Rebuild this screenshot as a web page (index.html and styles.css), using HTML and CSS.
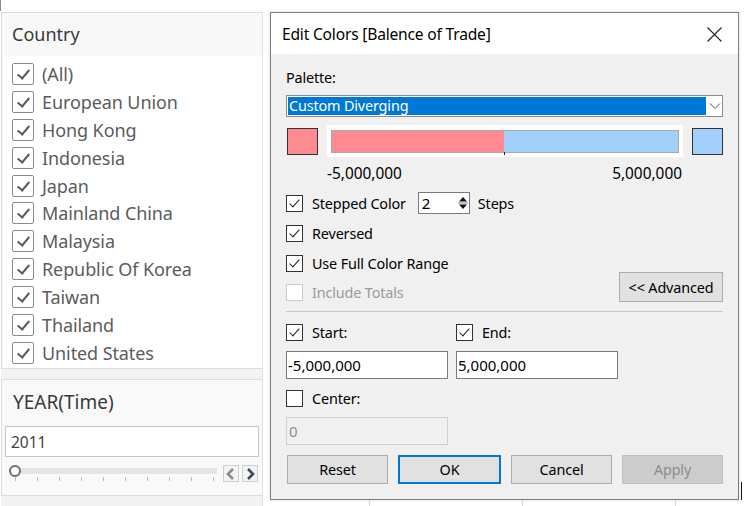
FILE: index.html
```html
<!DOCTYPE html>
<html>
<head>
<meta charset="utf-8">
<link rel="stylesheet" href="styles.css">
</head>
<body>
<div class="page">
  <aside class="sidebar">
    <section class="panel country">
      <div class="panel-head">Country</div>
      <ul class="list">
        <li><span class="cb"></span>(All)</li>
        <li><span class="cb"></span>European Union</li>
        <li><span class="cb"></span>Hong Kong</li>
        <li><span class="cb"></span>Indonesia</li>
        <li><span class="cb"></span>Japan</li>
        <li><span class="cb"></span>Mainland China</li>
        <li><span class="cb"></span>Malaysia</li>
        <li><span class="cb"></span>Republic Of Korea</li>
        <li><span class="cb"></span>Taiwan</li>
        <li><span class="cb"></span>Thailand</li>
        <li><span class="cb"></span>United States</li>
      </ul>
    </section>
    <section class="panel year">
      <div class="year-head">YEAR(Time)</div>
      <div class="year-input">2011</div>
      <div class="slider-row">
        <div class="slider">
          <div class="track"></div>
          <div class="knob"></div>
          <div class="ticks">
            <i></i><i></i><i></i><i></i><i></i><i></i><i></i><i></i><i></i><i></i>
          </div>
        </div>
        <div class="arrow prev"><svg width="14" height="14" viewBox="0 0 14 14"><path d="M9 2 L4 7 L9 12" fill="none" stroke="#8a8a8a" stroke-width="2.6"/></svg></div>
        <div class="arrow next"><svg width="14" height="14" viewBox="0 0 14 14"><path d="M5 2 L10 7 L5 12" fill="none" stroke="#3b4a5e" stroke-width="2.6"/></svg></div>
      </div>
    </section>
  </aside>
  <div class="gutter"></div>
  <div class="right">
    <div class="dialog">
      <div class="titlebar">
        <span class="title">Edit Colors [Balence of Trade]</span>
        <svg class="close" width="15" height="15" viewBox="0 0 15 15"><path d="M0.5 0.5 L14.5 14.5 M14.5 0.5 L0.5 14.5" stroke="#222" stroke-width="1.1"/></svg>
      </div>
      <div class="dbody">
        <div class="label-row">Palette:</div>
        <div class="select">
          <div class="select-val">Custom Diverging</div>
          <svg class="chev" width="12" height="8" viewBox="0 0 12 8"><path d="M1 1.5 L6 6.5 L11 1.5" fill="none" stroke="#555" stroke-width="1"/></svg>
        </div>
        <div class="swatch-row">
          <div class="swatch neg"></div>
          <div class="ramp">
            <div class="ramp-bar"><div class="ramp-neg"></div><div class="ramp-pos"></div></div>
            <div class="ramp-tick"></div>
          </div>
          <div class="swatch pos"></div>
        </div>
        <div class="range-labels"><span>-5,000,000</span><span>5,000,000</span></div>
        <div class="opt stepped">
          <span class="dcb on"></span><span>Stepped Color</span>
          <div class="spin"><span>2</span>
            <div class="spin-btns">
              <svg width="12" height="18" viewBox="0 0 12 18"><path d="M2 7.5 L6 3 L10 7.5 Z" fill="#111"/><path d="M2 10.5 L6 15 L10 10.5 Z" fill="#111"/><line x1="1" y1="9" x2="11" y2="9" stroke="#888" stroke-width="1"/></svg>
            </div>
          </div>
          <span>Steps</span>
        </div>
        <div class="opt rev"><span class="dcb on"></span><span>Reversed</span></div>
        <div class="opt full"><span class="dcb on"></span><span>Use Full Color Range</span></div>
        <div class="totals-row">
          <div class="opt disabled"><span class="dcb off"></span><span>Include Totals</span></div>
          <button class="btn adv">&lt;&lt; Advanced</button>
        </div>
        <div class="sep"></div>
        <div class="grid2">
          <div class="opt"><span class="dcb on"></span><span>Start:</span></div>
          <div class="opt"><span class="dcb on"></span><span>End:</span></div>
          <div class="field">-5,000,000</div>
          <div class="field">5,000,000</div>
          <div class="opt"><span class="dcb"></span><span>Center:</span></div>
          <div></div>
          <div class="field dis">0</div>
        </div>
        <div class="buttons">
          <button class="btn">Reset</button>
          <button class="btn ok">OK</button>
          <button class="btn">Cancel</button>
          <button class="btn applyb">Apply</button>
        </div>
      </div>
    </div>
    <div class="under"><i></i><i></i><i></i><i></i></div>
    <div class="cursor"></div>
  </div>
</div>
</body>
</html>
```

FILE: styles.css
```css
* { box-sizing: border-box; }
html, body { margin: 0; padding: 0; }
body {
  width: 744px;
  height: 506px;
  overflow: hidden;
  background: #ffffff;
  font-family: "Noto Sans", sans-serif;
}
.page {
  display: flex;
  padding-top: 12px;
  height: 506px;
  border-left: 1px solid #9a9a9a;
  border-image: linear-gradient(to bottom, #8a8a8a 0, #8a8a8a 12px, transparent 12px) 1;
}
.sidebar {
  width: 262px;
  background: #f3f3f3;
  display: flex;
  flex-direction: column;
  gap: 10px;
  height: 494px;
}
.panel {
  border: 1px solid #dcdcdc;
  background: #fff;
}
.country { height: 357px; }
.panel-head {
  height: 43px;
  background: #f8f8f8;
  padding: 10px 0 0 10px;
  font-size: 18px;
  color: #3a3a3a;
  line-height: 22px;
}
.list {
  list-style: none;
  margin: 0;
  padding: 4px 0 0 0;
}
.list li {
  height: 27.9px;
  display: flex;
  align-items: center;
  font-size: 18px;
  color: #5c5c5c;
  padding-left: 10px;
  white-space: nowrap;
  letter-spacing: -0.1px;
}
.cb {
  width: 22px;
  height: 22px;
  border: 1px solid #8a8a8a;
  border-radius: 2px;
  margin-right: 8px;
  position: relative;
  background: #fff;
  flex: none;
}
.cb::after {
  content: "";
  position: absolute;
  left: 7px;
  top: 3px;
  width: 5px;
  height: 10px;
  border: solid #5a5a5a;
  border-width: 0 2px 2px 0;
  transform: rotate(40deg);
}
.year {
  height: 117px;
  background: #f9f9f9;
  padding: 0 3px 0 3px;
}
.year-head {
  height: 46px;
  padding: 11px 0 0 8px;
  font-size: 19px;
  color: #3a3a3a;
  line-height: 22px;
}
.year-input {
  height: 31px;
  width: 254px;
  border: 1px solid #c6c6c6;
  background: #fff;
  font-size: 15.5px;
  color: #444;
  line-height: 31px;
  padding-left: 5px;
}
.slider-row {
  display: flex;
  align-items: center;
  margin-top: 8px;
  height: 17px;
}
.slider {
  position: relative;
  width: 216px;
  height: 17px;
}
.track {
  position: absolute;
  left: 10px;
  right: 4px;
  top: 3px;
  height: 6px;
  background: #e5e5e5;
}
.knob {
  position: absolute;
  left: 4px;
  top: 0;
  width: 12px;
  height: 12px;
  border-radius: 50%;
  border: 2px solid #6e6e6e;
  background: #fff;
}
.ticks {
  position: absolute;
  left: 10px;
  top: 12px;
  display: flex;
  gap: 21px;
}
.ticks i {
  display: block;
  width: 1px;
  height: 4px;
  background: #bdbdbd;
}
.arrow {
  width: 16px;
  height: 17px;
  border: 1px solid #d0d0d0;
  background: #f3f3f3;
  display: flex;
  align-items: center;
  justify-content: center;
}
.arrow.prev { margin-left: 2px; }
.arrow.next { margin-left: 3px; }
.gutter {
  width: 8px;
  border-left: 1px solid #e0e0e0;
  margin-left: -1px;
}
.right {
  position: relative;
  width: 473px;
}
.dialog {
  width: 469px;
  height: 488px;
  border: 1px solid #7d7d7d;
  background: #f0f0f0;
  box-shadow: 0 0 3px rgba(0,0,0,0.15);
  display: flex;
  flex-direction: column;
}
.titlebar {
  height: 41px;
  background: #fff;
  display: flex;
  align-items: center;
  justify-content: space-between;
  padding: 0 16px 0 11px;
  flex: none;
}
.title {
  font-size: 15.6px;
  color: #000;
  letter-spacing: -0.2px;
}
.close { margin-top: 1px; }
.dbody {
  padding: 14px 16px 0 15px;
  font-size: 14.4px;
  color: #000;
  letter-spacing: -0.15px;
}
.label-row {
  height: 20px;
  line-height: 20px;
}
.select {
  margin-top: 7px;
  height: 22px;
  border: 1px solid #8c8c8c;
  background: #fff;
  display: flex;
  align-items: center;
  padding: 1px;
  width: 437px;
}
.select-val {
  width: 418px;
  height: 18px;
  background: #0078d7;
  color: #fff;
  line-height: 18px;
  padding-left: 1px;
}
.chev { margin-left: 3px; }
.swatch-row {
  margin-top: 8px;
  height: 32px;
  display: flex;
  align-items: center;
  width: 437px;
}
.swatch {
  width: 31px;
  height: 27px;
  border: 1px solid #333;
  flex: none;
}
.swatch.neg { background: #ff8a91; margin-left: 1px; }
.swatch.pos { background: #a3cffb; margin-left: 9px; }
.ramp {
  margin-left: 9px;
  width: 356px;
  height: 32px;
  background: #fff;
  padding: 5px 4px 0 4px;
  position: relative;
}
.ramp-bar {
  height: 23px;
  border: 1px solid #a9a9a9;
  display: flex;
}
.ramp-neg { width: 172px; background: #ff8a91; }
.ramp-pos { flex: 1; background: #a3cffb; }
.ramp-tick {
  position: absolute;
  left: 177px;
  top: 27px;
  width: 1px;
  height: 3px;
  background: #222;
}
.range-labels {
  margin-top: 7px;
  height: 20px;
  line-height: 20px;
  display: flex;
  justify-content: space-between;
  padding-left: 41px;
  width: 396px;
  font-size: 15.4px;
  letter-spacing: 0;
}
.opt {
  display: flex;
  align-items: center;
  height: 20px;
  white-space: nowrap;
}
.dcb {
  width: 17px;
  height: 17px;
  border: 1px solid #333;
  background: #fff;
  margin-right: 9px;
  position: relative;
  flex: none;
}
.dcb.on::after {
  content: "";
  position: absolute;
  left: 5px;
  top: 1px;
  width: 4px;
  height: 9px;
  border: solid #222;
  border-width: 0 1.3px 1.3px 0;
  transform: rotate(42deg);
}
.dcb.off { border-color: #cccccc; }
.stepped {
  margin-top: 8px;
  height: 22px;
}
.spin {
  margin-left: 12px;
  width: 52px;
  height: 22px;
  border: 1px solid #7a7a7a;
  background: #fff;
  display: flex;
  align-items: center;
  justify-content: space-between;
  padding-left: 3px;
  margin-right: 8px;
  font-size: 15px;
}
.spin-btns { display: flex; align-items: center; height: 20px; }
.rev { margin-top: 9px; }
.full { margin-top: 10px; }
.totals-row {
  margin-top: -1px;
  height: 30px;
  display: flex;
  justify-content: space-between;
  align-items: flex-end;
  width: 437px;
}
.disabled { color: #9b9b9b; }
.btn {
  font-family: "Noto Sans", sans-serif;
  font-size: 14.4px;
  letter-spacing: -0.15px;
  background: #e1e1e1;
  border: 1px solid #adadad;
  color: #000;
  padding: 0;
  margin: 0;
}
.adv {
  width: 104px;
  height: 30px;
}
.sep {
  margin-top: 9px;
  height: 1px;
  background: #c9c9c9;
  width: 437px;
}
.grid2 {
  margin-top: 10px;
  display: grid;
  grid-template-columns: 162px 162px;
  column-gap: 8px;
  grid-template-rows: 20px 28px 20px 28px;
  row-gap: 9px;
}
.field {
  border: 1px solid #7a7a7a;
  background: #fff;
  line-height: 26px;
  padding-left: 1px;
  font-size: 15px;
  letter-spacing: 0;
}
.field.dis {
  border-color: #cfcfcf;
  background: #f0f0f0;
  color: #8d8d8d;
  padding-left: 2px;
}
.buttons {
  margin-top: 10px;
  display: flex;
  gap: 10px;
  width: 436px;
  margin-left: 1px;
}
.buttons .btn {
  flex: 1;
  height: 29px;
}
.btn.ok {
  border: 2px solid #0078d7;
}
.btn.applyb {
  background: #cccccc;
  border-color: #bfbfbf;
  color: #8c8c8c;
}
.under {
  display: flex;
  height: 6px;
}
.under i {
  display: block;
  height: 6px;
  border-left: 1px solid #d6d6d6;
}
.under i:nth-child(1) { width: 99px; border-left: none; }
.under i:nth-child(2) { width: 153px; }
.under i:nth-child(3) { width: 153px; }
.under i:nth-child(4) { width: 60px; }
.cursor {
  position: absolute;
  left: 471px;
  top: 470px;
  width: 1px;
  height: 18px;
  background: #111;
}
```
